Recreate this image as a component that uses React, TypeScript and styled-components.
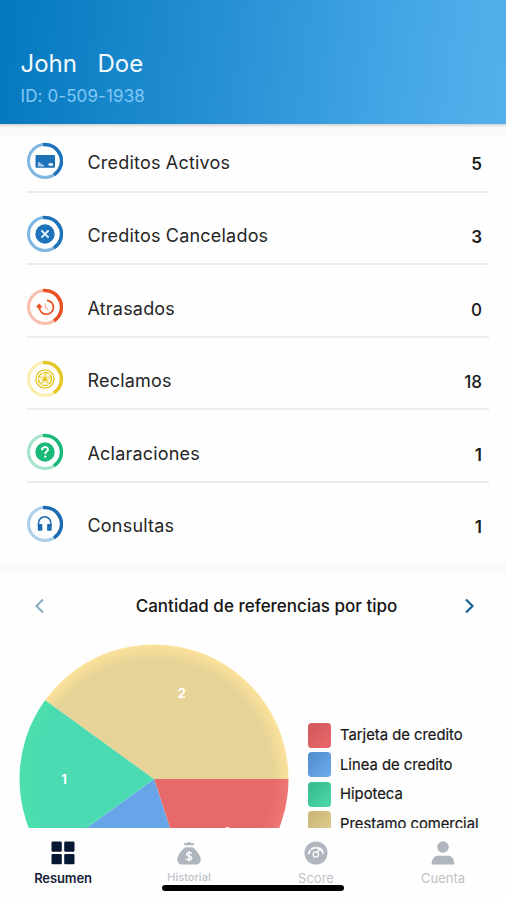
import React from "react";
import styled, { createGlobalStyle } from "styled-components";

const GlobalStyle = createGlobalStyle`
  *, *::before, *::after { box-sizing: border-box; }
  body { margin: 0; background: #fefefe; font-family: Inter, "Liberation Sans", sans-serif; }
`;

const Screen = styled.main`
  display: flex;
  flex-direction: column;
  width: 100%;
  height: 900px;
  overflow: hidden;
  background: #fefefe;
`;

const Header = styled.header`
  flex: none;
  display: flex;
  flex-direction: column;
  height: 123.5px;
  padding: 49px 20.5px 0;
  background: linear-gradient(97deg, #0579bf 2%, #2a93d6 48%, #46a7e6 80%, #54b0eb 100%);
  box-shadow: 0 1px 3px rgba(0, 0, 0, 0.22);
  z-index: 1;
`;

const UserName = styled.h1`
  display: flex;
  gap: 20.5px;
  margin: 0;
  font-size: 24px;
  line-height: 30px;
  font-weight: 400;
  letter-spacing: 0;
  color: #f3faff;
`;

const UserId = styled.p`
  margin: 6px 0 0;
  font-size: 17px;
  line-height: 22px;
  letter-spacing: 0.1px;
  color: #80c8f6;
`;

const Divider = styled.div<{ $height: number }>`
  flex: none;
  height: ${(p) => p.$height}px;
  background: #f9f9f9;
`;

const Summary = styled.ul`
  flex: none;
  list-style: none;
  height: 429px;
  margin: 0;
  padding: 0 17px 0 27px;
`;

const SummaryRow = styled.li`
  display: flex;
  align-items: center;
  height: 72.5px;
  padding: 13px 7px 0 0;
  border-bottom: 2px solid #ececec;
  &:first-child { height: 57.5px; padding-top: 0; padding-bottom: 3px; }
  &:last-child { border-bottom: 0; padding-top: 11px; }
`;

const RingSvg = styled.svg`
  flex: none;
  width: 36px;
  height: 38px;
`;

const RowLabel = styled.span`
  flex: 1;
  margin: 3px 0 0 24.5px;
  font-size: 18px;
  letter-spacing: 0.2px;
  color: #262626;
`;

const RowValue = styled.span<{ $weight: number }>`
  margin-top: 6px;
  font-size: 17px;
  font-weight: ${(p) => p.$weight};
  color: #1b1b1b;
`;

const References = styled.section`
  flex: none;
  height: 256px;
  overflow: hidden;
`;

const Carousel = styled.div`
  display: flex;
  align-items: center;
  justify-content: space-between;
  height: 67px;
  padding: 0 31px 0 34px;
`;

const CarouselTitle = styled.h2`
  margin: 1px 0 0 24px;
  font-size: 17px;
  font-weight: 500;
  white-space: nowrap;
  color: #151515;
`;

const Arrow = styled.button<{ $color: string }>`
  display: flex;
  padding: 0;
  border: 0;
  background: none;
  color: ${(p) => p.$color};
`;

const ChartArea = styled.div`
  display: flex;
  align-items: flex-start;
`;

const Pie = styled.svg`
  flex: none;
  width: 270px;
  height: 270px;
  margin: 5px 0 0 19px;
  font-size: 13px;
  font-weight: 700;
`;

const Legend = styled.ul`
  list-style: none;
  display: grid;
  gap: 4.5px;
  margin: 83.5px 0 0 19px;
  padding: 0;
`;

const LegendItem = styled.li`
  display: flex;
  align-items: center;
  gap: 9.5px;
  height: 25px;
  font-size: 14.8px;
  white-space: nowrap;
  color: #171717;
  -webkit-text-stroke: 0.2px #171717;
`;

const Swatch = styled.span<{ $color: string; $shade: string }>`
  width: 22.5px;
  height: 25px;
  border-radius: 4px;
  background: linear-gradient(135deg, ${(p) => p.$shade}, ${(p) => p.$color} 80%);
  box-shadow: inset 0 0 2px ${(p) => p.$color};
`;

const TabBar = styled.nav`
  position: relative;
  display: grid;
  grid-template-columns: 126px 126px 128px 126px;
  flex: none;
  height: 72px;
  padding-top: 12px;
  background: #fefefe;
`;

const Tab = styled.a<{ $active?: boolean; $small?: boolean }>`
  display: flex;
  flex-direction: column;
  align-items: center;
  gap: ${(p) => (p.$small ? 3 : 4)}px;
  font-size: ${(p) => (p.$small ? 11 : 13)}px;
  line-height: 16px;
  font-weight: ${(p) => (p.$active ? 600 : p.$small ? 500 : 400)};
  letter-spacing: ${(p) => (p.$active ? -0.1 : 0)}px;
  color: ${(p) => (p.$active ? "#14213a" : "#bfc3c8")};
  svg { width: 26px; height: 26px; flex: none; color: ${(p) => (p.$active ? "#061832" : "#b0b6be")}; }
`;

const HomeIndicator = styled.div`
  position: absolute;
  left: 162px;
  top: 56.5px;
  width: 182px;
  height: 6px;
  border-radius: 3px;
  background: #000;
`;

type Kind = "card" | "cancel" | "late" | "claim" | "help" | "support";

function Glyph({ kind, color }: { kind: Kind; color: string }) {
  switch (kind) {
    case "card":
      return (
        <g>
          <rect x="8.5" y="13" width="19.5" height="12.8" rx="1" fill={color} />
          <path d="M11 24.5v-4.3h2v1.3h2.200v1.400h2v1.600z" fill="#a9cae8" />
          <rect x="21.5" y="21.2" width="4.5" height="2.6" rx="1" fill="#fff" />
        </g>
      );
    case "cancel":
      return (
        <g>
          <circle cx="18" cy="19" r="9.7" fill={color} />
          <path d="M14.400 15.400l7.200 7.200m0-7.200l-7.200 7.200" stroke="#e9f4fd" strokeWidth="2" />
        </g>
      );
    case "late":
      return (
        <g fill="none" stroke={color}>
          <path d="M20 12.300a7 7 0 1 1-7.600 7.200" strokeWidth="1.700" />
          <path d="M9.300 18.800l2.900-3 3 3.300-1.900.4-1.100 1.900-1-2z" fill={color} stroke={color} strokeWidth=".5" />
          <path d="M18.500 15.500v4l3 2.300" strokeWidth="1.200" opacity=".45" />
        </g>
      );
    case "claim":
      return (
        <g fill="none" stroke={color}>
          <circle cx="18" cy="19" r="9.1" strokeWidth="1.3" />
          <circle cx="18" cy="19" r="6.5" strokeWidth="1.5" strokeDasharray="6 1" />
          <path d="M18 13.5l1.5 3.4 3.8.4-2.8 2.5.8 3.8-3.3-2-3.3 2 .8-3.8-2.8-2.5 3.8-.4z" strokeWidth=".8" />
          <path d="M15.5 18.8l2.5-2.5 2.5 2.5-1 2.5h-3z" fill={color} stroke="none" />
        </g>
      );
    case "help":
      return (
        <g>
          <circle cx="18" cy="19" r="9.7" fill={color} />
          <path d="M15 17.2c0-4 6-4 6-.6 0 2-2.8 1.9-2.8 4.3" fill="none" stroke="#fff" strokeWidth="2" />
          <circle cx="18.2" cy="23.6" r="1.2" fill="#fff" />
        </g>
      );
    case "support":
      return (
        <g>
          <path d="M11.5 21.500v-3.200a6.200 6.600 0 0 1 12.400 0v3.200" fill="none" stroke={color} strokeWidth="1.500" />
          <rect x="10.800" y="19" width="4.500" height="6.800" rx=".9" fill={color} />
          <rect x="20.100" y="19" width="4.500" height="6.800" rx=".9" fill={color} />
        </g>
      );
  }
}

function RingIcon({ kind, color, track }: { kind: Kind; color: string; track: string }) {
  return (
    <RingSvg viewBox="0 0 36 38">
      <circle cx="18" cy="19" r="16.5" fill="none" stroke={track} strokeWidth="3" />
      <path d="M16 2.600A16.500 16.500 0 0 1 27 32.800" fill="none" stroke={color} strokeWidth="3.400" />
      <Glyph kind={kind} color={color} />
    </RingSvg>
  );
}

const rows: { label: string; value: number; weight: number; kind: Kind; color: string; track: string }[] = [
  { label: "Creditos Activos", value: 5, weight: 600, kind: "card", color: "#1d72b9", track: "#7db6df" },
  { label: "Creditos Cancelados", value: 3, weight: 600, kind: "cancel", color: "#1d72b9", track: "#7db6df" },
  { label: "Atrasados", value: 0, weight: 500, kind: "late", color: "#e95022", track: "#f9bfae" },
  { label: "Reclamos", value: 18, weight: 500, kind: "claim", color: "#e5c622", track: "#fbeeb0" },
  { label: "Aclaraciones", value: 1, weight: 600, kind: "help", color: "#19b978", track: "#a5e5ca" },
  { label: "Consultas", value: 1, weight: 600, kind: "support", color: "#1b6cb1", track: "#acd0e9" },
];

const legend = [
  { label: "Tarjeta de credito", color: "#e66567", shade: "#cf585a" },
  { label: "Linea de credito", color: "#68a5e8", shade: "#5089c9" },
  { label: "Hipoteca", color: "#48d3a4", shade: "#35b789" },
  { label: "Prestamo comercial", color: "#decb8b", shade: "#c6b374" },
];

const slices = [
  { from: 0, to: 72, color: "#e66a69", rim: "#ee7776", value: 1 },
  { from: 72, to: 144, color: "#68a5e8", rim: "#75b2f5", value: 1 },
  { from: 144, to: 216, color: "#4bdab1", rim: "#4ce0aa", value: 1 },
  { from: 216, to: 360, color: "#e5d397", rim: "#fce29a", value: 2 },
];

const polar = (angle: number, radius: number) => {
  const a = (angle * Math.PI) / 180;
  return [135 + radius * Math.cos(a), 135 + radius * Math.sin(a)];
};

function PieChart() {
  return (
    <Pie viewBox="0 0 270 270">
      <defs>
        {slices.map((s) => (
          <radialGradient key={s.from} id={`slice-${s.from}`} gradientUnits="userSpaceOnUse" cx="135" cy="135" r="134.5">
            <stop offset="0.88" stopColor={s.color} />
            <stop offset="1" stopColor={s.rim} />
          </radialGradient>
        ))}
      </defs>
      {slices.map((s) => {
        const [x1, y1] = polar(s.from, 134.5);
        const [x2, y2] = polar(s.to, 134.5);
        return (
          <path key={s.from} d={`M135 135L${x1} ${y1}A134.5 134.5 0 0 1 ${x2} ${y2}Z`} fill={`url(#slice-${s.from})`} />
        );
      })}
      {slices.map((s) => {
        const [x, y] = polar((s.from + s.to) / 2, 90);
        return (
          <text key={s.from} x={x} y={y + 5} textAnchor="middle" fill="#fff">
            {s.value}
          </text>
        );
      })}
    </Pie>
  );
}

export default function App() {
  return (
    <Screen>
      <GlobalStyle />
      <Header>
        <UserName>
          <span>John</span>
          <span>Doe</span>
        </UserName>
        <UserId>ID: 0-509-1938</UserId>
      </Header>
      <Divider $height={11.5} />
      <Summary>
        {rows.map((r) => (
          <SummaryRow key={r.label}>
            <RingIcon kind={r.kind} color={r.color} track={r.track} />
            <RowLabel>{r.label}</RowLabel>
            <RowValue $weight={r.weight}>{r.value}</RowValue>
          </SummaryRow>
        ))}
      </Summary>
      <Divider $height={8} />
      <References>
        <Carousel>
          <Arrow $color="#86a9be" aria-label="Anterior">
            <svg width="11" height="16" viewBox="0 0 11 16" fill="none" stroke="currentColor" strokeWidth="2">
              <path d="M9 1.5L2.5 8 9 14.5" />
            </svg>
          </Arrow>
          <CarouselTitle>Cantidad de referencias por tipo</CarouselTitle>
          <Arrow $color="#19629a" aria-label="Siguiente">
            <svg width="11" height="16" viewBox="0 0 11 16" fill="none" stroke="currentColor" strokeWidth="2.2">
              <path d="M2 1.5L8.5 8 2 14.5" />
            </svg>
          </Arrow>
        </Carousel>
        <ChartArea>
          <PieChart />
          <Legend>
            {legend.map((l) => (
              <LegendItem key={l.label}>
                <Swatch $color={l.color} $shade={l.shade} />
                {l.label}
              </LegendItem>
            ))}
          </Legend>
        </ChartArea>
      </References>
      <TabBar>
        <Tab $active>
          <svg viewBox="0 0 26 26" fill="currentColor">
            <rect x="1.5" y="1.5" width="10.3" height="10.2" rx="1.3" />
            <rect x="14.2" y="1.5" width="10.3" height="10.2" rx="1.3" />
            <rect x="1.5" y="14.1" width="10.3" height="10.2" rx="1.3" />
            <rect x="14.2" y="14.1" width="10.3" height="10.2" rx="1.3" />
          </svg>
          Resumen
        </Tab>
        <Tab $small>
          <svg viewBox="0 0 26 26" fill="currentColor">
            <path d="M7.500 3l3 .2L13 1.700l2.500 1.500 3-.2-1.300 2.300H8.800z" />
            <path d="M9.300 7.300h7.400c4 3.400 8 8 8 12.200 0 3-2 5-5 5H6.300c-3 0-5-2-5-5 0-4.200 4-8.800 8-12.200z" />
            <path
              d="M15.800 13.600c-1.500-1.600-5.300-1.300-5.300.8s5.200 1.200 5.200 3.500-3.900 2.500-5.600.8M13 11v10.500"
              fill="none"
              stroke="#fff"
              strokeWidth="1.4"
            />
          </svg>
          Historial
        </Tab>
        <Tab>
          <svg viewBox="0 0 26 26">
            <circle cx="13" cy="13" r="11.5" fill="currentColor" />
            <path d="M5.600 14a7.500 7.500 0 0 1 14.800 0" fill="none" stroke="#fff" strokeWidth="2" strokeDasharray="4.200 .8" />
            <circle cx="12.8" cy="14.500" r="2.700" fill="currentColor" stroke="#fff" strokeWidth="1.2" />
            <path d="M14 12.500l4-4.500" stroke="#fff" strokeWidth="1.400" />
          </svg>
          Score
        </Tab>
        <Tab>
          <svg viewBox="0 0 26 26" fill="currentColor">
            <circle cx="13" cy="7" r="5.8" />
            <path d="M1.500 24.500c.5-5.200 2.300-8.800 6-8.800h11c3.700 0 5.500 3.600 6 8.800z" />
          </svg>
          Cuenta
        </Tab>
        <HomeIndicator />
      </TabBar>
    </Screen>
  );
}
